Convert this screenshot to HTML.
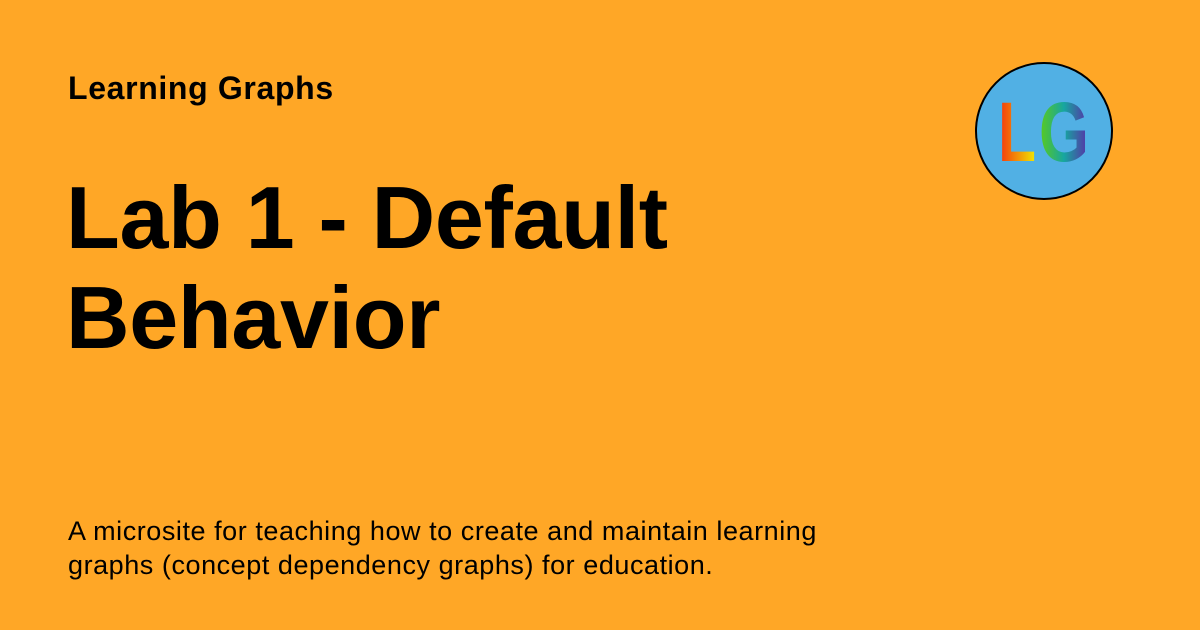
<!DOCTYPE html>
<html><head><style>
body{margin:0;width:1200px;height:630px;background:#FFA726;font-family:"Liberation Sans",Arial,sans-serif;color:#000;position:relative;overflow:hidden}
.site{position:absolute;left:68px;top:70px;font-size:32px;font-weight:bold;letter-spacing:0.65px}
.title{position:absolute;left:66px;top:168px;font-size:88px;font-weight:bold;line-height:100px;letter-spacing:-0.3px}
.desc{position:absolute;left:68px;top:514px;font-size:27px;line-height:34px;letter-spacing:0.55px}
</style></head><body>
<div class="site">Learning Graphs</div>
<div class="title">Lab 1 - Default<br>Behavior</div>
<div class="desc">A microsite for teaching how to create and maintain learning<br>graphs (concept dependency graphs) for education.</div>
<svg style="position:absolute;left:970px;top:58px" width="150" height="146">
<defs>
<linearGradient id="a" x1="0" y1="0" x2="1" y2="0"><stop offset="0" stop-color="#f4300e"/><stop offset="1" stop-color="#f2ea00"/></linearGradient>
<linearGradient id="b" x1="0" y1="0" x2="1" y2="0"><stop offset="0" stop-color="#5ccc18"/><stop offset="0.5" stop-color="#16a6a0"/><stop offset="1" stop-color="#5a2ca8"/></linearGradient>
</defs>
<circle cx="74" cy="73" r="68" fill="#51b0e4" stroke="#000" stroke-width="2"/>
<text x="28" y="103" font-family="Liberation Sans,sans-serif" font-weight="bold" font-size="84" fill="url(#a)" textLength="38" lengthAdjust="spacingAndGlyphs">L</text>
<text x="69" y="103" font-family="Liberation Sans,sans-serif" font-weight="bold" font-size="84" fill="url(#b)" textLength="50" lengthAdjust="spacingAndGlyphs">G</text>
</svg>
</body></html>
